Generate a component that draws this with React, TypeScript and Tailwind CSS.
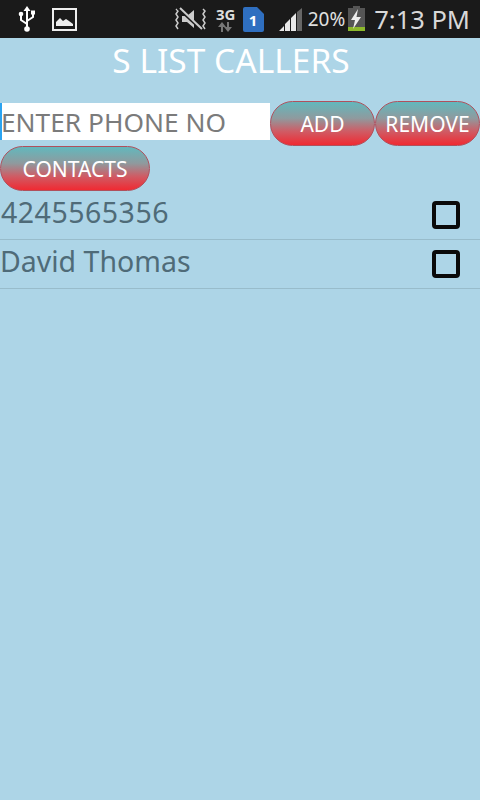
const pillClass =
  "h-[45px] rounded-[23px] border border-[#b0505c] bg-[linear-gradient(to_bottom,#62b8bd_0%,#8f9a9e_38%,#cf5c65_68%,#f02a32_100%)] pt-[2px] text-[21px] text-white flex items-center justify-center";

const StatusIcons = () => (
  <>
    <svg width="20" height="28" viewBox="0 0 20 28" className="ml-[17px]" fill="none" stroke="#fff" strokeWidth="2">
      <path d="M10 4v20M10 19l-6-4v-4M10 16l6-4v-3" />
      <path d="M10 1l3.500 5h-7z" fill="#fff" stroke="none" />
      <circle cx="4" cy="9" r="2.300" fill="#fff" stroke="none" />
      <rect x="14" y="5.500" width="4" height="4" fill="#fff" stroke="none" />
      <circle cx="10" cy="24" r="2.800" fill="#fff" stroke="none" />
    </svg>
    <svg width="25" height="23" viewBox="0 0 25 23" className="ml-[15px]" fill="none">
      <rect x="1" y="1" width="23" height="21" stroke="#eee" strokeWidth="2" />
      <path d="M4 18v-4l4-4 3 3 3-2 3 2 4 3v2z" fill="#eee" />
    </svg>
  </>
);

const StatusRight = () => (
  <div className="flex items-center">
    <svg width="32" height="28" viewBox="0 0 32 28" fill="none" className="mr-[9px]">
      <path d="M1 4l2 2-2 3 2 3-2 3 2 3-2 3 2 3" stroke="#ccc" strokeWidth="1.500" />
      <path d="M29 4l2 2-2 3 2 3-2 3 2 3-2 3 2 3" stroke="#ccc" strokeWidth="1.500" transform="translate(-1 0)" />
      <path d="M7 11h5l7-6v18l-7-6h-5z" fill="#ccc" />
      <path d="M3 3l25 23" stroke="#1a1a1a" strokeWidth="3" />
      <path d="M5 3l22 21" stroke="#ccc" strokeWidth="2" />
    </svg>
    <div className="flex w-[20px] flex-col items-center mr-[7px] leading-none">
      <span className="text-[15px] font-bold text-[#ddd] leading-[15px]">3G</span>
      <svg width="16" height="10" viewBox="0 0 16 10" fill="#777">
        <path d="M9 0h2v5h3l-4 5-4-5h3z" />
        <path d="M3 10V5H0l4-5 4 5H5v5z" />
      </svg>
    </div>
    <svg width="21" height="25" viewBox="0 0 21 25" className="mr-[15px]">
      <path d="M2 0h12l7 7v16a2 2 0 0 1-2 2H2a2 2 0 0 1-2-2V2a2 2 0 0 1 2-2z" fill="#2f6fc0" />
      <text x="10" y="19" fontSize="15" fontWeight="700" fill="#fff" textAnchor="middle" fontFamily="'Noto Sans', sans-serif">1</text>
    </svg>
    <svg width="25" height="23" viewBox="0 0 25 23" className="mr-[4px]">
      <path d="M0 23l5-5v5zM6 23v-7l5-5v12zM12 23V10l5-5v18z" fill="#e8e8e8" />
      <path d="M18 23V4l5-4v23z" fill="#666" />
    </svg>
    <span className="text-[19px] text-[#e0e0e0] mr-[2px]">20%</span>
    <svg width="19" height="27" viewBox="0 0 19 27" className="mr-[8px]">
      <rect x="6" y="0" width="7" height="3" fill="#555" />
      <rect x="1" y="2" width="17" height="19" fill="#555" />
      <rect x="1" y="21" width="17" height="4" fill="#8cb82b" />
      <path d="M11 3l-7 11h4l-2 9 8-12H9.500z" fill="#eee" />
    </svg>
    <span className="text-[25.500px] text-[#d8d8d8] mr-[10px]">7:13 PM</span>
  </div>
);

const RowItem = ({ label, wide }: { label: string; wide?: boolean }) => (
  <div className="flex h-[49px] items-center justify-between border-b border-[#98bccb] pr-[20px]">
    <span className={`pb-[6px] text-[28.500px] text-[#4f6b78] ${wide ? "pl-[1px] tracking-[0.5px]" : ""}`}>{label}</span>
    <div className="mb-[1px] h-[28px] w-[28px] rounded-[4px] border-[4px] border-[#0a0a0a]" />
  </div>
);

export default function App() {
  return (
    <div className="flex h-[800px] w-[480px] flex-col overflow-hidden bg-[#add5e7] font-['Noto_Sans','Open_Sans',sans-serif]">
      {/* status bar */}
      <div className="flex h-[38px] items-center justify-between bg-[#1a1a1a]">
        <div className="flex items-center">
          <StatusIcons />
        </div>
        <StatusRight />
      </div>

      <div className="flex h-[63px] items-center justify-center pr-[18px] pb-[18px] text-[33.500px] text-white">
        S LIST CALLERS
      </div>

      <div className="flex h-[45px]">
        <div className="mt-[2px] flex h-[37px] w-[270px] items-center border-l-2 border-[#2ba3f0] bg-white pt-[3px] text-[26.300px] text-[#7b7b7b] [text-indent:-1px]">
          ENTER PHONE NO
        </div>
        <button className={`${pillClass} w-[105px]`}>ADD</button>
        <button className={`${pillClass} w-[105px]`}>REMOVE</button>
      </div>

      <button className={`${pillClass} w-[150px]`}>CONTACTS</button>

      <RowItem label="4245565356" wide />
      <RowItem label="David Thomas" />
    </div>
  );
}
